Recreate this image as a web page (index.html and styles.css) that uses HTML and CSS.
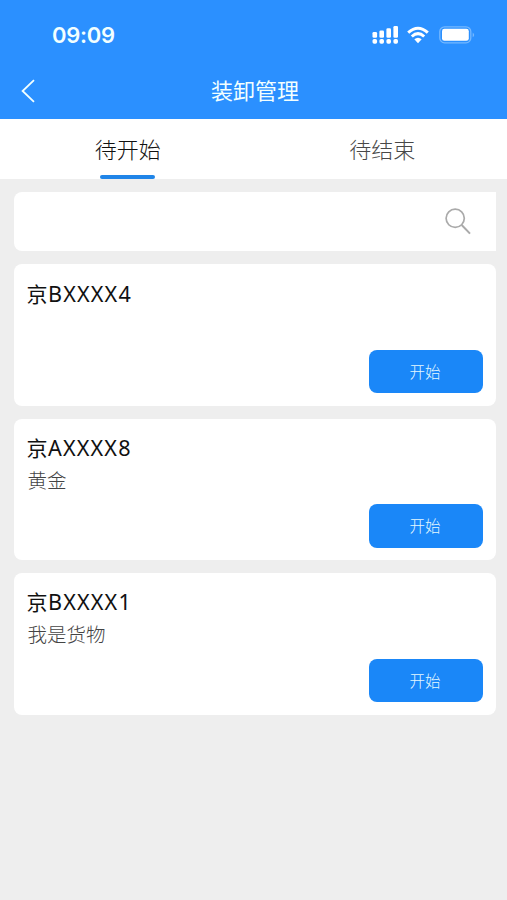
FILE: index.html
```html
<!DOCTYPE html>
<html lang="zh-CN">
<head>
<meta charset="utf-8">
<meta name="viewport" content="width=device-width, initial-scale=1">
<title>装卸管理</title>
<link rel="stylesheet" href="styles.css">
</head>
<body>
<header class="header">
  <div class="status">
    <span class="time">09:09</span>
    <div class="status-icons">
      <svg class="signal" width="26" height="20" viewBox="0 0 26 20" fill="currentColor">
        <rect x=".5" y="7" width="4.6" height="5.7" rx="1.3"/><rect x="7.4" y="5.5" width="4.6" height="7.2" rx="1.3"/><rect x="14.4" y="3.2" width="4.6" height="9.5" rx="1.3"/><rect x="21.4" y="1" width="4.6" height="11.7" rx="1.3"/>
        <rect x=".5" y="14" width="4.6" height="4.8" rx="1.7"/><rect x="7.4" y="14" width="4.6" height="4.8" rx="1.7"/><rect x="14.4" y="14" width="4.6" height="4.8" rx="1.7"/><rect x="21.4" y="14" width="4.6" height="4.8" rx="1.7"/>
      </svg>
      <svg class="wifi" width="22" height="18" viewBox="0 0 22 18" fill="none" stroke="currentColor" stroke-width="3">
        <path d="M1.2 6.7Q11-2.3 20.8 6.7M4.8 10.5Q11 4.7 17.2 10.5"/>
        <path d="M7.3 13.3Q11 10.3 14.7 13.3L11 17.2Z" fill="currentColor" stroke="none"/>
      </svg>
      <svg class="battery" width="36" height="18" viewBox="0 0 36 18">
        <rect x=".8" y=".8" width="31" height="16" rx="4.8" fill="none" stroke="#75b8ff" stroke-width="1.3"/>
        <rect x="3" y="2.8" width="26.8" height="12" rx="2.4" fill="#fff"/>
        <path d="M33.7 6.5q3 2.4 0 4.8z" fill="#75b8ff"/>
      </svg>
    </div>
  </div>
  <div class="navbar">
    <svg class="back" width="14" height="24" viewBox="0 0 14 24" fill="none" stroke="currentColor" stroke-width="1.8"><path d="M13 1.2 1.6 12 13 22.8"/></svg>
    <h1 class="title">装卸管理</h1>
  </div>
</header>
<nav class="tabs">
  <div class="tab active">待开始</div>
  <div class="tab">待结束</div>
</nav>
<main class="content">
  <div class="search">
    <svg width="26" height="27" viewBox="0 0 26 27" fill="none" stroke="#aaa" stroke-width="1.7"><circle cx="10.2" cy="10.3" r="9.1"/><path d="M16.7 17 25 25.6" stroke-width="2"/></svg>
  </div>
  <section class="card">
    <h2 class="plate first">京<span class="number">BXXXX4</span></h2>
    <button class="start">开始</button>
  </section>
  <section class="card">
    <h2 class="plate">京<span class="number">AXXXX8</span></h2>
    <p class="cargo">黄金</p>
    <button class="start">开始</button>
  </section>
  <section class="card">
    <h2 class="plate">京<span class="number">BXXXX1</span></h2>
    <p class="cargo">我是货物</p>
    <button class="start">开始</button>
  </section>
</main>
</body>
</html>
```
FILE: styles.css
```css
* {
  box-sizing: border-box;
}
body {
  margin: 0;
  min-height: 900px;
  background: #eee;
  font-family: "Noto Sans", "Noto Sans CJK SC", sans-serif;
}
h1, h2, p {
  margin: 0;
  font-weight: 400;
}
svg {
  display: block;
}
.header {
  height: 119px;
  background: #2b90ff;
  color: #f2ffff;
}
.status {
  height: 63px;
  padding: 6px 32px 0 52px;
  display: flex;
  align-items: center;
  justify-content: space-between;
}
.time {
  font: 600 22px/28px Inter, sans-serif;
  letter-spacing: -0.3px;
}
.status-icons {
  display: flex;
  align-items: center;
  color: #fff;
}
.wifi {
  margin: 0 10px 0 9px;
}
.navbar {
  height: 56px;
  padding-left: 21px;
  padding-right: 32px;
  display: flex;
  align-items: center;
}
.title {
  flex: 1;
  text-align: center;
  font-size: 22px;
  line-height: 30px;
  font-family: "Noto Sans CJK SC", sans-serif;
  margin-top: -4px;
}
.tabs {
  height: 60px;
  background: #fff;
  display: flex;
}
.tab {
  flex: 1;
  display: flex;
  flex-direction: column;
  align-items: center;
  padding: 13px 0 0 5px;
  font: 300 22px/32px "Noto Sans CJK SC", sans-serif;
  color: #484848;
}
.tab.active {
  color: #111;
  padding-left: 3px;
}
.tab.active::after {
  content: "";
  width: 55px;
  height: 4px;
  margin-top: 11px;
  border-radius: 2px;
  background: #2085e8;
}
.content {
  padding: 13px 11px 0 14px;
  display: flex;
  flex-direction: column;
  gap: 13px;
}
.search {
  height: 59px;
  padding-right: 25px;
  background: #fff;
  border-radius: 8px 0 0 8px;
  display: flex;
  align-items: center;
  justify-content: flex-end;
}
.card {
  height: 141.5px;
  padding: 14px 13.5px 12.5px 12.5px;
  background: #fff;
  border-radius: 8px;
  display: flex;
  flex-direction: column;
}
.plate {
  font-size: 21px;
  line-height: 30px;
  color: #111;
}
.plate.first {
  padding-top: 1px;
}
.number {
  font-size: 21.6px;
  letter-spacing: 1.15px;
  margin-left: 0.5px;
}
.cargo {
  padding-left: 1px;
  font: 300 19.5px/28px "Noto Sans CJK SC", sans-serif;
  color: #444;
  margin-top: 3px;
}
.start {
  width: 114px;
  height: 43.5px;
  margin-top: auto;
  align-self: flex-end;
  padding: 0 1px 1px 0;
  border: 0;
  border-radius: 8px;
  background: #1a87f8;
  color: #e4f8ff;
  font: 300 15.5px/24px "Noto Sans CJK SC", sans-serif;
}
```
